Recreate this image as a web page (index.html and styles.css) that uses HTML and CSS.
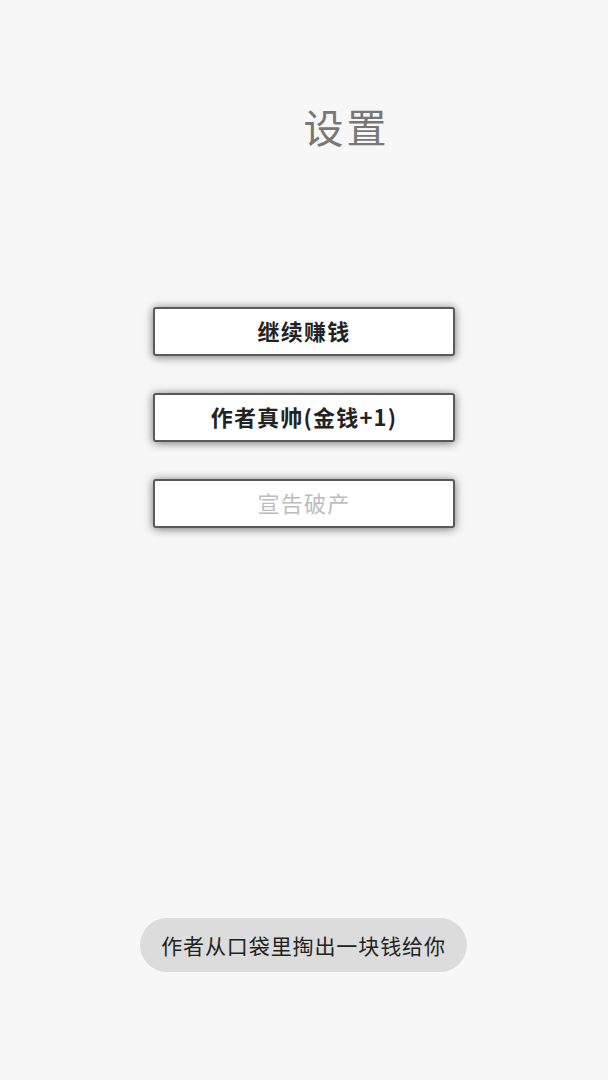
FILE: index.html
```html
<!DOCTYPE html>
<html lang="zh-CN">
<head>
<meta charset="utf-8">
<title>设置</title>
<link rel="stylesheet" href="styles.css">
</head>
<body>
<main class="page">
  <h1 class="title">设置</h1>
  <div class="menu">
    <button class="btn">继续赚钱</button>
    <button class="btn">作者真帅(金钱+1)</button>
    <button class="btn btn-disabled">宣告破产</button>
  </div>
  <div class="toast">作者从口袋里掏出一块钱给你</div>
</main>
</body>
</html>
```
FILE: styles.css
```css
html, body {
  margin: 0;
  padding: 0;
  background: #f7f7f7;
}
body {
  width: 608px;
  height: 1080px;
  font-family: "Noto Sans CJK SC", "Noto Sans", sans-serif;
  position: relative;
}
.page {
  display: flex;
  flex-direction: column;
  align-items: center;
}
.title {
  margin: 104px 0 0 0;
  padding-left: 85px;
  font-size: 40px;
  line-height: 44px;
  font-weight: 400;
  color: #777;
  letter-spacing: 3px;
}
.menu {
  margin-top: 159px;
  display: flex;
  flex-direction: column;
  gap: 37px;
  align-items: center;
}
.btn {
  box-sizing: border-box;
  width: 302px;
  height: 49px;
  border: 2px solid #5a5a5a;
  border-radius: 3px;
  background: #fff;
  box-shadow: 0 1px 10px rgba(0, 0, 0, 0.55);
  font-family: "Noto Sans CJK SC", "Noto Sans", sans-serif;
  font-size: 22px;
  font-weight: 700;
  letter-spacing: 1.2px;
  color: #222;
  padding: 0 0 3px 0;
  line-height: 1;
}
.btn-disabled {
  color: #bdbdbd;
  font-weight: 400;
}
.toast {
  position: absolute;
  top: 918px;
  left: 140px;
  width: 327px;
  height: 54px;
  border-radius: 27px;
  background: #dcdcdc;
  display: flex;
  align-items: center;
  justify-content: center;
  font-size: 21px;
  letter-spacing: 0.9px;
  color: #222;
}
```
